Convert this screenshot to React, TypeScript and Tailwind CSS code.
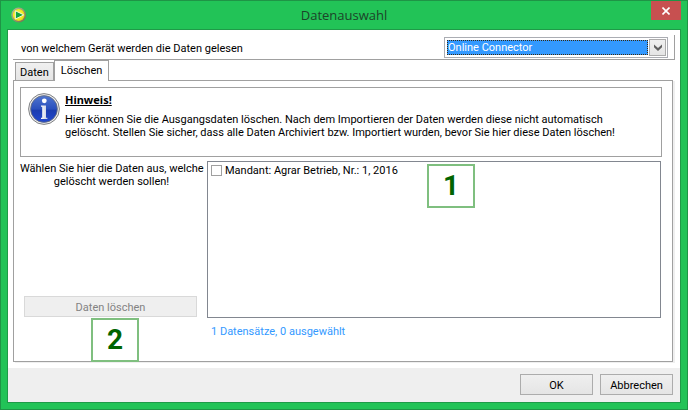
import { useState } from 'react';
import type { ReactNode } from 'react';

interface Datensatz {
  id: string;
  name: string;
}

const geraete = ['Online Connector'];

const datensaetze: Datensatz[] = [
  { id: 'agrar-2016', name: 'Mandant: Agrar Betrieb, Nr.: 1, 2016' },
];

const AppIcon = () => (
  <svg viewBox="0 0 16 16" className="size-4 shrink-0" aria-hidden="true">
    <defs>
      <linearGradient id="ring" x1="0" y1="0" x2="1" y2="1">
        <stop offset="0" stopColor="#b9bf9a" />
        <stop offset="1" stopColor="#6f6c4a" />
      </linearGradient>
      <radialGradient id="gelb" cx="0.45" cy="0.45" r="0.6">
        <stop offset="0" stopColor="#fbf77a" />
        <stop offset="0.7" stopColor="#f2e81c" />
        <stop offset="1" stopColor="#d6c414" />
      </radialGradient>
    </defs>
    <circle cx="7.7" cy="8" r="7.4" fill="url(#ring)" />
    <circle cx="7.7" cy="8" r="5.9" fill="url(#gelb)" />
    <path d="M4.4 3.8 L12.8 7.9 L4.4 12 Z" fill="#12a544" stroke="#fbfbe0" strokeWidth="0.9" strokeLinejoin="round" />
  </svg>
);

const InfoIcon = () => (
  <svg viewBox="0 0 32 32" className="size-8 shrink-0" aria-hidden="true">
    <defs>
      <linearGradient id="blau" x1="0" y1="0" x2="0" y2="1">
        <stop offset="0" stopColor="#4f75cf" />
        <stop offset="0.5" stopColor="#2a50bd" />
        <stop offset="0.55" stopColor="#1b3cb0" />
        <stop offset="1" stopColor="#2148cf" />
      </linearGradient>
      <linearGradient id="stab" x1="0" y1="0" x2="1" y2="0">
        <stop offset="0" stopColor="#ffffff" />
        <stop offset="1" stopColor="#c4cae0" />
      </linearGradient>
    </defs>
    <circle cx="16" cy="16" r="15.4" fill="#ececec" stroke="#7f8184" />
    <circle cx="16" cy="16" r="13.4" fill="url(#blau)" stroke="#6b7079" strokeWidth="0.8" />
    <circle cx="16.3" cy="7.8" r="2.4" fill="#ffffff" />
    <path d="M13 12.6 H18 V24.8 H19.4 V26 H13 V24.8 H14.2 V13.8 H13 Z" fill="url(#stab)" />
  </svg>
);

const Marke = ({ children }: { children: ReactNode }) => (
  <span className="flex h-11 w-12 items-center justify-center border-2 border-[#7fbf7f] bg-white font-[family-name:Roboto,sans-serif] text-[28px] leading-none font-bold text-[#006400]">
    {children}
  </span>
);

const tabKlassen = {
  aktiv: 'relative -mb-px h-[21px] border border-b-0 border-[#a0a0a0] bg-white px-[6px] pb-[2px]',
  inaktiv: 'h-[18px] border border-b-0 border-[#a0a0a0] bg-linear-to-b from-[#f0f0f0] to-[#e5e5e5] px-1 pt-[2px]',
};

const knopf = 'h-[21px] w-[73px] border border-[#acacac] bg-linear-to-b from-[#efefef] to-[#e5e5e5] pt-[2px]';

export default function App() {
  const [geraet, setGeraet] = useState(geraete[0]);
  const [tab, setTab] = useState('loeschen');
  const [auswahl, setAuswahl] = useState<string[]>([]);

  const umschalten = (id: string) => {
    setAuswahl(auswahl.includes(id) ? auswahl.filter((a) => a !== id) : [...auswahl, id]);
  };

  return (
    <div className="flex min-h-screen flex-col border border-[#1f9446] bg-[#22c357] px-[6px] pb-[6px] font-[family-name:Roboto,sans-serif] text-[11px] leading-[13px] text-black">
      {/* Titelleiste */}
      <header className="grid h-7 grid-cols-[1fr_auto_1fr] items-center">
        <div className="pl-1">
          <AppIcon />
        </div>
        <h1 className="font-[family-name:Open_Sans,sans-serif] text-[13px] leading-5 text-[#1c4429]">Datenauswahl</h1>
        <button
          type="button"
          aria-label="Schließen"
          className="flex h-[19px] w-[30px] items-center justify-center self-start justify-self-end bg-[#c75050]"
        >
          <svg viewBox="0 0 8 8" className="size-2" aria-hidden="true">
            <path d="M0.5 0.5 L7.5 7.5 M7.5 0.5 L0.5 7.5" stroke="#fff" strokeWidth="1.6" />
          </svg>
        </button>
      </header>

      <div className="flex grow flex-col border border-[#1f9a48] bg-white">
        <main className="flex grow flex-col px-[5px] pt-[5px] pb-[6px]">
          {/* Geräteauswahl */}
          <div className="flex h-[25px] items-center justify-between border-r border-b border-[#a0a0a0] pr-[6px] pl-2">
            <label htmlFor="geraet" className="pt-[2px]">von welchem Gerät werden die Daten gelesen</label>
            <div className="relative h-[21px] w-56 border border-[#abadb3] p-[2px]">
              <select
                id="geraet"
                value={geraet}
                onChange={(e) => setGeraet(e.target.value)}
                className="block h-[15px] w-[201px] appearance-none border border-dotted border-[#3a2a10] bg-[#3399ff] leading-[13px] text-white outline-none"
              >
                {geraete.map((g) => (
                  <option key={g}>{g}</option>
                ))}
              </select>
              <span className="pointer-events-none absolute top-px right-px flex size-[17px] items-center justify-center border border-[#acacac] bg-linear-to-b from-[#f0f0f0] to-[#e5e5e5]">
                <svg viewBox="0 0 8 7" className="h-[7px] w-2" aria-hidden="true">
                  <path d="M0 0.5 L4 4 L8 0.5 V3.2 L4 7 L0 3.2 Z" fill="#606060" />
                </svg>
              </span>
            </div>
          </div>

          {/* Reiter */}
          <div role="tablist" className="flex items-end pl-[2px]">
            <button
              type="button"
              role="tab"
              aria-selected={tab === 'daten'}
              onClick={() => setTab('daten')}
              className={tab === 'daten' ? tabKlassen.aktiv : tabKlassen.inaktiv}
            >
              Daten
            </button>
            <button
              type="button"
              role="tab"
              aria-selected={tab === 'loeschen'}
              onClick={() => setTab('loeschen')}
              className={tab === 'loeschen' ? tabKlassen.aktiv : tabKlassen.inaktiv}
            >
              Löschen
            </button>
          </div>

          <section className="mr-[2px] flex grow flex-col border border-[#a0a0a0] px-[6px] pt-[6px] shadow-[2px_1px_0_#efefef]">
            <div className="mr-[4px] flex h-[70px] gap-[5px] border border-[#a0a0a0] px-[7px] pt-[5px]">
              <InfoIcon />
              <div>
                <p className="font-[family-name:Noto_Sans,sans-serif] font-bold underline">Hinweis!</p>
                <p className="mt-[7px]">
                  Hier können Sie die Ausgangsdaten löschen. Nach dem Importieren der Daten werden diese nicht automatisch
                  <br />
                  gelöscht. Stellen Sie sicher, dass alle Daten Archiviert bzw. Importiert wurden, bevor Sie hier diese Daten löschen!
                </p>
              </div>
            </div>

            <div className="mt-1 mr-[5px] flex grow gap-1">
              <div className="flex w-[183px] shrink-0 flex-col">
                <p className="pt-px text-center whitespace-nowrap">
                  Wählen Sie hier die Daten aus, welche
                  <br />
                  gelöscht werden sollen!
                </p>
                <div className="relative mt-auto mr-[6px] mb-11 ml-1">
                  <button
                    type="button"
                    disabled={auswahl.length === 0}
                    className="h-[21px] w-full border border-[#d9d9d9] bg-[#efefef] pt-[2px] disabled:text-[#838383]"
                  >
                    Daten löschen
                  </button>
                  <div className="absolute top-[22px] left-[67px]">
                    <Marke>2</Marke>
                  </div>
                </div>
              </div>

              <div className="flex grow flex-col">
                <div className="relative h-[157px] border border-[#828790] px-[3px] pt-[2px]">
                  <ul>
                    {datensaetze.map((d) => (
                      <li key={d.id}>
                        <label className="flex items-center gap-[3px]">
                          <input
                            type="checkbox"
                            checked={auswahl.includes(d.id)}
                            onChange={() => umschalten(d.id)}
                            className="size-[11px] appearance-none border border-[#a0a0a0] bg-white checked:bg-[#3399ff]"
                          />
                          {d.name}
                        </label>
                      </li>
                    ))}
                  </ul>
                  <div className="absolute top-[2px] left-[219px]">
                    <Marke>1</Marke>
                  </div>
                </div>
                <p className="mt-[7px] pl-1 text-[#3399ff]">
                  {datensaetze.length} Datensätze, {auswahl.length} ausgewählt
                </p>
              </div>
            </div>
          </section>
        </main>

        <footer className="flex justify-end gap-[7px] bg-[#efefef] px-[7px] pt-[6px] pb-[7px]">
          <button type="button" className={knopf}>OK</button>
          <button type="button" className={knopf}>Abbrechen</button>
        </footer>
      </div>
    </div>
  );
}
